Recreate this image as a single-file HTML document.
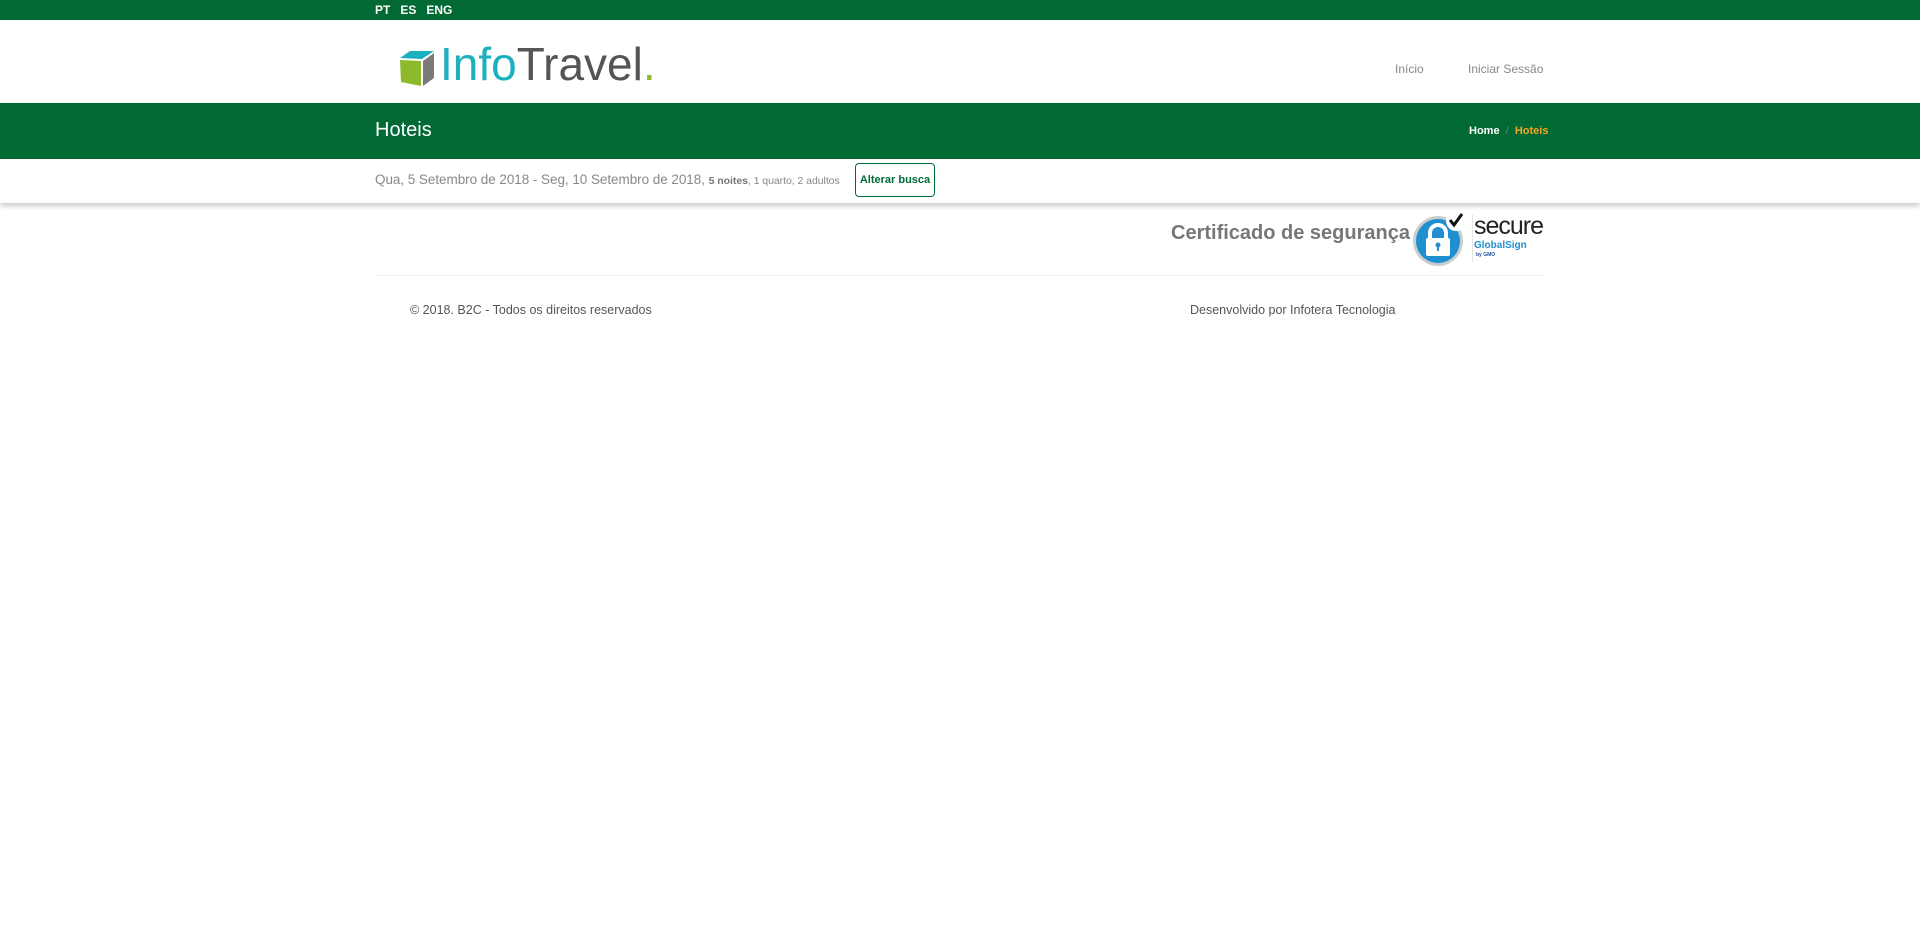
<!DOCTYPE html>
<html><head><meta charset="utf-8"><style>
*{margin:0;padding:0;box-sizing:border-box}
body{width:1920px;height:930px;background:#fff;font-family:"Liberation Sans",sans-serif;position:relative;overflow:hidden}
.abs{position:absolute}
</style></head><body>
<div class="abs" style="left:0;top:0;width:1920px;height:20px;background:#006934"></div>
<div class="abs" style="left:375px;top:3px;font-size:12px;font-weight:bold;color:#fff">PT&nbsp;&nbsp;&nbsp;ES&nbsp;&nbsp;&nbsp;ENG</div>

<svg class="abs" style="left:396px;top:48px" width="42" height="38" viewBox="0 0 42 38">
<polygon points="4,10 14,3 38,3 26,11" fill="#1ab0bd"/>
<polygon points="4,12 25,13 25,38 5,34" fill="#8cba2b"/>
<polygon points="27,13 38,5 38,30 27,38" fill="#7a7a7a"/>
</svg>
<div class="abs" style="left:440px;top:36px;font-size:46px;line-height:56px;letter-spacing:0px"><span style="color:#1ab0bd">Info</span><span style="color:#555">Travel</span><span style="color:#8cba2b">.</span></div>

<div class="abs" style="left:1395px;top:62px;font-size:12px;color:#888">Início</div>
<div class="abs" style="left:1468px;top:62px;font-size:12px;color:#888">Iniciar Sessão</div>

<div class="abs" style="left:0;top:103px;width:1920px;height:56px;background:#006934"></div>
<div class="abs" style="left:375px;top:119px;font-size:20px;color:#fff">Hoteis</div>
<div class="abs" style="left:1469px;top:125px;font-size:11px;font-weight:bold;color:#fff">Home <span style="color:#5a8a7a;font-weight:normal">&nbsp;/&nbsp;</span> <span style="color:#f5a623">Hoteis</span></div>

<div class="abs" style="left:0;top:159px;width:1920px;height:44px;background:#fff;box-shadow:0 3px 5px rgba(0,0,0,0.2)"></div>
<div class="abs" style="left:375px;top:172px;font-size:13.5px;color:#888;white-space:nowrap;letter-spacing:-0.05px">Qua, 5 Setembro de 2018 - Seg, 10 Setembro de 2018, <span style="font-size:10.5px;font-weight:bold;color:#777">5 noites</span><span style="font-size:10.5px">, 1 quarto, 2 adultos</span></div>
<div class="abs" style="left:855px;top:163px;width:80px;height:34px;border:1px solid #006934;border-radius:4px;font-size:11px;font-weight:bold;color:#006934;text-align:center;line-height:32px;background:#fff">Alterar busca</div>

<div class="abs" style="left:1171px;top:222px;font-size:20px;font-weight:bold;color:#777">Certificado de segurança</div>
<svg class="abs" style="left:1412px;top:211px" width="56" height="56" viewBox="0 0 56 56">
<circle cx="26" cy="30" r="25" fill="#c8cdd0"/>
<circle cx="26" cy="30" r="22" fill="#1f8fd0"/>
<path d="M18 28v-6a8 8 0 0 1 16 0v6" fill="none" stroke="#fff" stroke-width="4"/>
<rect x="14" y="27" width="24" height="18" rx="2" fill="#fff"/>
<circle cx="26" cy="34" r="2.5" fill="#1f8fd0"/><rect x="25" y="35" width="2" height="5" fill="#1f8fd0"/>
<circle cx="44" cy="10" r="10" fill="#fff"/>
<path d="M38 9l4 5l8-11" fill="none" stroke="#111" stroke-width="3"/>
</svg>
<div class="abs" style="left:1472px;top:214px;width:1px;height:48px;background:#e5e5e5"></div>
<div class="abs" style="left:1474px;top:212px;font-size:25px;color:#222;letter-spacing:-1px">secure</div>
<div class="abs" style="left:1474px;top:240px;font-size:10px;font-weight:bold;color:#1f8fd0">GlobalSign</div>
<div class="abs" style="left:1476px;top:252px;font-size:5px;font-weight:bold;color:#1f4f9a">by GMO</div>

<div class="abs" style="left:375px;top:275px;width:1170px;height:1px;background:#eee"></div>
<div class="abs" style="left:410px;top:303px;font-size:12.5px;color:#555">© 2018. B2C - Todos os direitos reservados</div>
<div class="abs" style="left:1190px;top:303px;font-size:12.5px;color:#555">Desenvolvido por Infotera Tecnologia</div>
</body></html>
